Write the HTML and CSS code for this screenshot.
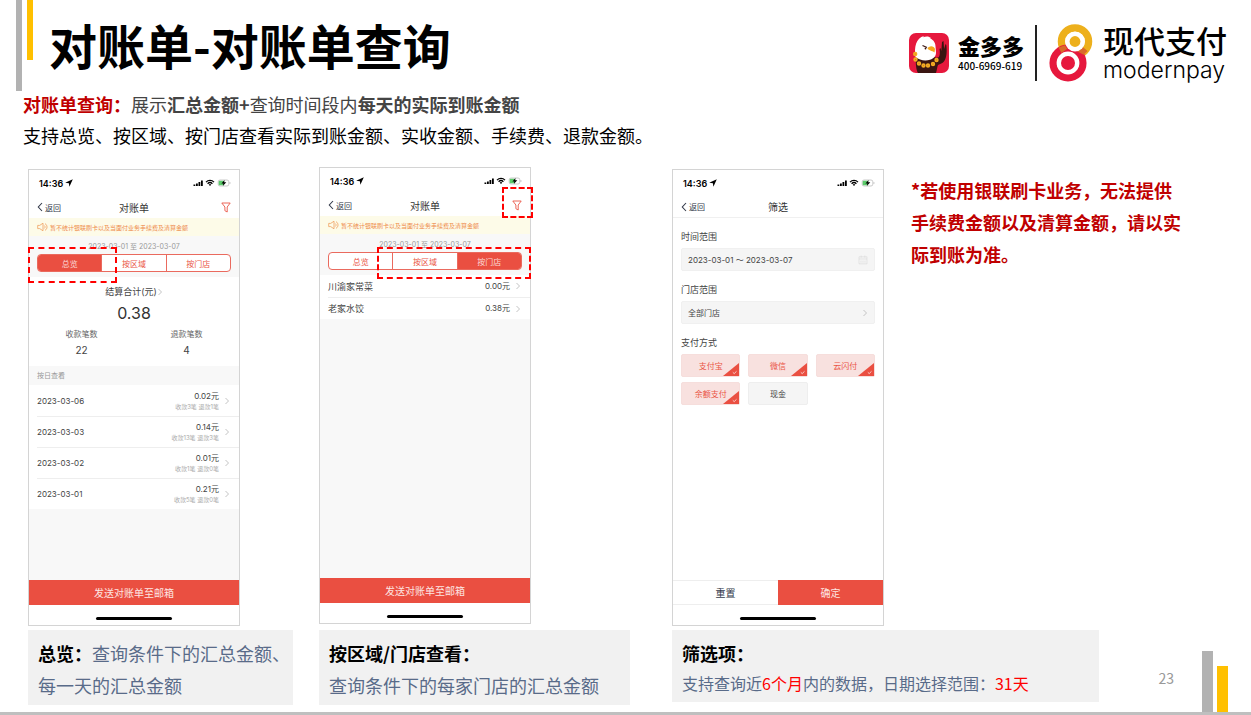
FILE: index.html
```html
<!DOCTYPE html>
<html lang="zh-CN">
<head>
  <meta charset="UTF-8" />
  <meta name="viewport" content="width=device-width, initial-scale=1.0"/>
  <title>对账单-对账单查询</title>
  <link rel="stylesheet" href="styles.css">
</head>
<body>
  <!-- shared icons -->
  <svg class="sprite" width="0" height="0" aria-hidden="true">
    <symbol id="i-arrow" viewBox="0 0 8 8"><path d="M7.8 .2 .2 3.800l3.700.5.5 3.500z"/></symbol>
    <symbol id="i-status" viewBox="0 0 38 8">
      <path d="M.5 5.4h1.8V7H.5zM3 4.400h1.800V7H3zM5.500 3h1.800v4H5.500zM8 1.400h1.800V7H8z"/>
      <path d="M13 3.1a5.6 5.6 0 0 1 8 0M14.6 4.7a3.4 3.4 0 0 1 4.8 0" fill="none" stroke="#000" stroke-width="1.3"/>
      <path d="M15.8 5.7a1.7 1.7 0 0 1 2.4 0L17 7z"/>
      <rect x="25.2" y="1" width="10.6" height="6" rx="1.8" fill="#fff" stroke="#aaa" stroke-width=".6"/>
      <path d="M26.6 1.7h4.2v4.6h-4.2a.9.9 0 0 1-.9-.9V2.600a.9.9 0 0 1 .9-.9z" fill="#5ccb6b"/>
      <path d="M31.600 1 28.400 4.500h2L29.800 7l3.500-3.700h-2.100z"/>
      <path d="M36.600 3v2c.7-.2.9-.5.9-1s-.2-.8-.9-1z" fill="#aaa"/>
    </symbol>
    <symbol id="i-back" viewBox="0 0 6 10"><path d="M5 1 1.300 5 5 9" fill="none" stroke="#333a4a" stroke-width="1.100"/></symbol>
    <symbol id="i-next" viewBox="0 0 6 8"><path d="M1.500 1 4.500 4l-3 3" fill="none" stroke="#c4c4c4" stroke-width="1"/></symbol>
    <symbol id="i-filter" viewBox="0 0 10 11"><path d="M.8 1h8.400L6.200 5v5L3.900 8.700V5z" fill="none" stroke="#ea5546" stroke-width=".9" stroke-linejoin="round"/></symbol>
    <symbol id="i-horn" viewBox="0 0 11 10"><path d="M.7 3.400h2L6 1.200v7.600L2.700 6.600h-2zM7.300 3.500c1 .8 1 2.200 0 3M8 1.600c2.700 1.600 2.700 5.200 0 6.800" fill="none" stroke="#efa060" stroke-width=".8"/></symbol>
    <symbol id="i-cal" viewBox="0 0 10 10"><path d="M1 1.800h8v7H1zM1 4h8M3.200.6v2M6.800.6v2M3 5.600v2M5 5.600v2M7 5.600v2" fill="none" stroke="#d8d8d8" stroke-width=".6"/></symbol>
    <symbol id="i-tick" viewBox="0 0 16 13"><path d="M16 0v13H0z" fill="#ea4f41"/><path d="M9.800 9.300l1.400 1.300 2.300-2.300" fill="none" stroke="#fff" stroke-width=".7"/></symbol>
  </svg>

  <div class="bar bar-top-grey"></div>
  <div class="bar bar-top-yellow"></div>

  <header class="slide-header">
    <h1>对账单-对账单查询</h1>
    <div class="brands">
      <svg class="eagle" viewBox="0 0 40 40" role="img" aria-label="金多多">
        <rect width="40" height="40" rx="7" fill="#e6183d"/>
        <path d="M9 40c-2-3-2.500-10-2-15l18-1c2 1 4 1 5 0 1-2 1-5 .5-8l1-1 .8 3 .7-9 1.500-1 .6 8 1.400-5 .8 1c.8 6 .5 12-2 16-2 3-5 3-6.300 4-1 2-1 5-2 8z" fill="#3a1511"/>
        <path d="M6.500 24C5 14 7 5 15 3l-1 1.300c3-1.300 6-1.300 8 .7l-1 .3c4 2 5.500 5 5.500 8l.5 6c0 4-2 6-6 7.500-5 1.500-10.500.5-14.500-2.800z" fill="#fff"/>
        <path d="M18.500 15.500c1-3 6.500-3.500 7.500.5l-.5 3.500c-1.500-2-4.500-1-7-4z" fill="#f6a81c"/>
        <path d="M13.500 12.500l4.500 2" stroke="#3a1511" stroke-width="1.200"/>
        <circle cx="16.500" cy="15.500" r=".9" fill="#3a1511"/>
        <g fill="#b8502a" stroke="#f4ac22" stroke-width="1.800">
          <circle cx="6.200" cy="21" r="1.300"/><circle cx="6.500" cy="26.500" r="1.300"/><circle cx="10" cy="30.500" r="1.300"/><circle cx="14.500" cy="32.500" r="1.300"/><circle cx="19" cy="32.500" r="1.300"/><circle cx="24" cy="31" r="1.300"/><circle cx="27.500" cy="27" r="1.300"/>
        </g>
      </svg>
      <div class="jdd">
        <span class="jdd-name">金多多</span>
        <span class="jdd-tel">400-6969-619</span>
      </div>
      <span class="brand-line"></span>
      <svg class="eight" viewBox="0 0 44 58" role="img" aria-label="现代支付">
        <circle cx="26" cy="17.500" r="13.500" fill="none" stroke="#edb01c" stroke-width="7.500"/>
        <circle cx="19" cy="39" r="14.800" fill="none" stroke="#e6183d" stroke-width="7.500"/>
        <path d="M9.500 23.500l6.300-2.300 2.500 3.500-5.800 4.300zM28 27.200l6.600 3.600 4-3.800-5.800-4.700z" fill="#d96a2a"/>
        <circle cx="26" cy="17.500" r="10" fill="#fff"/>
        <circle cx="19" cy="39" r="11.400" fill="#fff"/>
        <circle cx="26" cy="17.500" r="5.400" fill="#edb01c"/>
        <circle cx="19" cy="39" r="7" fill="#e6183d"/>
      </svg>
      <div class="modern">
        <span class="modern-cn">现代支付</span>
        <span class="modern-en">modernpay</span>
      </div>
    </div>
  </header>

  <section class="intro">
    <p class="intro-first"><strong class="lead">对账单查询：</strong>展示<strong>汇总金额+</strong>查询时间段内<strong>每天的实际到账金额</strong></p>
    <p>支持总览、按区域、按门店查看实际到账金额、实收金额、手续费、退款金额。</p>
  </section>

  <main class="shots">
    <section class="shot">
      <div class="phone">
        <div class="status"><span>14:36</span><svg class="loc"><use href="#i-arrow"/></svg><svg class="signals"><use href="#i-status"/></svg></div>
        <div class="nav"><button class="back"><svg><use href="#i-back"/></svg>返回</button><h2>对账单</h2><button class="filter" aria-label="筛选"><svg><use href="#i-filter"/></svg></button></div>
        <p class="notice"><svg><use href="#i-horn"/></svg>暂不统计银联刷卡以及当面付业务手续费及清算金额</p>
        <div class="range">
          <p>2023-03-01 至 2023-03-07</p>
          <div class="tabs"><button class="on">总览</button><button>按区域</button><button>按门店</button></div>
        </div>
        <div class="summary">
          <p class="sum-title">结算合计(元)<svg class="next"><use href="#i-next"/></svg></p>
          <p class="sum-value">0.38</p>
          <dl class="counts">
            <div><dt>收款笔数</dt><dd>22</dd></div>
            <div><dt>退款笔数</dt><dd>4</dd></div>
          </dl>
        </div>
        <p class="band">按日查看</p>
        <ul class="days">
          <li><span class="day">2023-03-06</span><span class="money">0.02元<small>收款3笔 退款1笔</small></span><svg class="next"><use href="#i-next"/></svg></li>
          <li><span class="day">2023-03-03</span><span class="money">0.14元<small>收款13笔 退款3笔</small></span><svg class="next"><use href="#i-next"/></svg></li>
          <li><span class="day">2023-03-02</span><span class="money">0.01元<small>收款1笔 退款0笔</small></span><svg class="next"><use href="#i-next"/></svg></li>
          <li><span class="day">2023-03-01</span><span class="money">0.21元<small>收款5笔 退款0笔</small></span><svg class="next"><use href="#i-next"/></svg></li>
        </ul>
        <div class="fill"></div>
        <div class="actions"><button class="primary">发送对账单至邮箱</button></div>
        <div class="home"></div>
        <div class="mark mark-all"></div>
      </div>
      <p class="caption"><strong>总览：</strong>查询条件下的汇总金额、<br>每一天的汇总金额</p>
    </section>

    <section class="shot shot-stores">
      <div class="phone">
        <div class="status"><span>14:36</span><svg class="loc"><use href="#i-arrow"/></svg><svg class="signals"><use href="#i-status"/></svg></div>
        <div class="nav"><button class="back"><svg><use href="#i-back"/></svg>返回</button><h2>对账单</h2><button class="filter" aria-label="筛选"><svg><use href="#i-filter"/></svg></button></div>
        <p class="notice"><svg><use href="#i-horn"/></svg>暂不统计银联刷卡以及当面付业务手续费及清算金额</p>
        <div class="range">
          <p>2023-03-01 至 2023-03-07</p>
          <div class="tabs"><button>总览</button><button>按区域</button><button class="on">按门店</button></div>
        </div>
        <ul class="stores">
          <li><span>川渝家常菜</span><span class="money">0.00元</span><svg class="next"><use href="#i-next"/></svg></li>
          <li><span>老家水饺</span><span class="money">0.38元</span><svg class="next"><use href="#i-next"/></svg></li>
        </ul>
        <div class="fill"></div>
        <div class="actions"><button class="primary">发送对账单至邮箱</button></div>
        <div class="home"></div>
        <div class="mark mark-filter"></div>
        <div class="mark mark-tabs"></div>
      </div>
      <p class="caption"><strong>按区域/门店查看：</strong><br>查询条件下的每家门店的汇总金额</p>
    </section>

    <section class="shot shot-filter">
      <div class="with-note">
        <div class="phone">
          <div class="status"><span>14:36</span><svg class="loc"><use href="#i-arrow"/></svg><svg class="signals"><use href="#i-status"/></svg></div>
          <div class="nav nav-line"><button class="back"><svg><use href="#i-back"/></svg>返回</button><h2>筛选</h2></div>
          <form class="form">
            <label class="field-name" for="range">时间范围</label>
            <div class="field"><input id="range" type="text" value="2023-03-01 ～ 2023-03-07"><svg class="cal"><use href="#i-cal"/></svg></div>
            <label class="field-name" for="store">门店范围</label>
            <div class="field"><select id="store"><option>全部门店</option></select><svg class="next"><use href="#i-next"/></svg></div>
            <fieldset>
              <legend class="field-name">支付方式</legend>
              <div class="chips">
                <label class="chip"><input type="checkbox" checked>支付宝<svg><use href="#i-tick"/></svg></label>
                <label class="chip"><input type="checkbox" checked>微信<svg><use href="#i-tick"/></svg></label>
                <label class="chip"><input type="checkbox" checked>云闪付<svg><use href="#i-tick"/></svg></label>
                <label class="chip"><input type="checkbox" checked>余额支付<svg><use href="#i-tick"/></svg></label>
                <label class="chip"><input type="checkbox">现金<svg><use href="#i-tick"/></svg></label>
              </div>
            </fieldset>
          </form>
          <div class="actions"><button class="plain">重置</button><button class="primary">确定</button></div>
          <div class="home"></div>
        </div>
        <p class="note">*若使用银联刷卡业务，无法提供手续费金额以及清算金额，请以实际到账为准。</p>
      </div>
      <p class="caption"><strong>筛选项：</strong><span class="caption-small">支持查询近<em>6个月</em>内的数据，日期选择范围：<em>31天</em></span></p>
    </section>
  </main>

  <footer class="corner">
    <span class="page-no">23</span>
    <div class="bar-grey"></div>
    <div class="bar-yellow"></div>
  </footer>
</body>
</html>
```
FILE: styles.css
```css
* {
  box-sizing: border-box;
}

body {
  position: relative;
  min-height: 100vh;
  margin: 0;
  background: #fff;
  border-bottom: 3px solid #bfbfbf;
  font-family: "Noto Sans CJK SC", sans-serif;
  color: #000;
}

h1, h2, p, ul, dl, dd, fieldset {
  margin: 0;
  padding: 0;
}

ul { list-style: none; }

button, input, select {
  margin: 0;
  padding: 0;
  border: 0;
  background: none;
  font: inherit;
  color: inherit;
}

.sprite { position: absolute; }

/* slide decoration */
.bar {
  position: absolute;
  top: 0;
  width: 6px;
}

.bar-top-grey {
  left: 16px;
  height: 91px;
  background: #b2b2b2;
}

.bar-top-yellow {
  left: 27px;
  height: 60px;
  background: #ffc000;
}

.corner {
  position: absolute;
  right: 23px;
  bottom: 0;
  display: flex;
  align-items: flex-end;
  gap: 4px;
}

.bar-grey {
  width: 11px;
  height: 61px;
  background: #b2b2b2;
}

.bar-yellow {
  width: 11px;
  height: 46px;
  background: #ffc000;
}

.page-no {
  padding: 0 24px 24px 0;
  font-size: 14px;
  line-height: 20px;
  color: #999;
}

/* header */
.slide-header {
  display: flex;
  justify-content: space-between;
  align-items: center;
  height: 89px;
  padding: 0 24px 2px 49px;
}

h1 {
  font-size: 48px;
  line-height: 64px;
  font-weight: 700;
}

.brands {
  display: flex;
  align-items: center;
  padding-top: 18px;
}

.eagle {
  width: 40px;
  height: 40px;
}

.jdd {
  display: flex;
  flex-direction: column;
  margin: 0 11px 0 9px;
}

.jdd-name {
  font-size: 22px;
  line-height: 26px;
  font-weight: 900;
}

.jdd-tel {
  font-size: 10px;
  line-height: 15px;
  font-weight: 500;
}

.brand-line {
  width: 2px;
  height: 56px;
  background: #222;
}

.eight {
  width: 44px;
  height: 58px;
  margin: 0 10px 0 12px;
}

.modern {
  display: flex;
  flex-direction: column;
}

.modern-cn {
  font-size: 31px;
  line-height: 34px;
  font-weight: 500;
}

.modern-en {
  font-family: Inter, sans-serif;
  font-size: 23px;
  line-height: 26px;
  font-weight: 300;
}

/* intro text */
.intro {
  padding-left: 23px;
  font-size: 18px;
  line-height: 31px;
}

.intro-first { color: #444; }
.lead { color: #c00000; }

/* columns */
.shots {
  display: grid;
  grid-template-columns: 291fr 353fr 515fr;
  padding: 16px 64px 7px 28px;
}

.shot {
  display: flex;
  flex-direction: column;
  gap: 4px;
  padding-top: 2px;
}

.shot-stores {
  gap: 6px;
  padding-top: 0;
}

.with-note {
  display: flex;
  gap: 27px;
}

.note {
  flex: 1;
  padding-top: 5px;
  font-size: 18px;
  line-height: 32px;
  font-weight: 700;
  color: #c00000;
}

.caption {
  width: 91%;
  padding: 7px 0 4px 10px;
  background: #f1f1f1;
  font-size: 18px;
  line-height: 32px;
  color: #596b89;
  white-space: nowrap;
}

.caption strong { color: #000; }

.caption em {
  font-style: normal;
  color: #f00;
}

.shot-stores .caption { width: 88%; }
.shot-filter .caption { width: 83%; }

.caption-small {
  display: block;
  font-size: 16px;
  line-height: 29px;
}

/* phone */
.phone {
  position: relative;
  display: flex;
  flex-direction: column;
  flex-shrink: 0;
  width: 212px;
  min-height: 457px;
  border: 1px solid #d4d4d4;
  font-family: Inter, "Noto Sans CJK SC", sans-serif;
  font-size: 8px;
  color: #444;
}

.status {
  display: flex;
  align-items: center;
  gap: 2px;
  height: 26px;
  padding: 0 8px 0 10px;
  font-size: 9px;
  font-weight: 600;
  color: #000;
}

.loc {
  width: 8px;
  height: 8px;
}

.signals {
  width: 38px;
  height: 8px;
  margin-left: auto;
}

.nav {
  display: grid;
  grid-template-columns: 1fr auto 1fr;
  align-items: center;
  height: 22px;
  padding: 0 8px;
}

.nav-line { border-bottom: 1px solid #f0f0f0; }

.nav h2 {
  font-size: 10px;
  font-weight: 400;
  color: #333;
}

.back {
  display: flex;
  align-items: center;
  gap: 2px;
  color: #333a4a;
}

.back svg {
  width: 6px;
  height: 10px;
}

.filter {
  justify-self: end;
  display: flex;
}

.filter svg {
  width: 10px;
  height: 11px;
}

.notice {
  display: flex;
  align-items: center;
  gap: 2px;
  height: 18px;
  padding-left: 8px;
  background: #fdfbe8;
  font-size: 6px;
  color: #ee8a4a;
  white-space: nowrap;
}

.notice svg {
  width: 11px;
  height: 10px;
}

.range {
  padding: 4px 8px 5px;
  background: #f8f8f8;
}

.range p {
  font-size: 7px;
  line-height: 14px;
  text-align: center;
  color: #999;
}

.tabs {
  display: flex;
  height: 18px;
  overflow: hidden;
  border: 1px solid #ea6a5e;
  border-radius: 4px;
  background: #fff;
  color: #ea5546;
}

.tabs button { flex: 1; }
.tabs button + button { border-left: 1px solid #ea6a5e; }

.tabs .on {
  background: #ea4f41;
  color: #fbd9d5;
}

.summary {
  padding-top: 7px;
  text-align: center;
}

.next {
  width: 6px;
  height: 8px;
}

.sum-title {
  display: flex;
  justify-content: center;
  align-items: center;
  font-size: 9px;
  line-height: 16px;
}

.sum-value {
  font-size: 16px;
  line-height: 26px;
  color: #333;
}

.counts {
  display: flex;
  padding-bottom: 8px;
  line-height: 16px;
}

.counts div { flex: 1; }
.counts dt { color: #666; }
.counts dd { font-size: 10px; }

.band {
  padding-left: 8px;
  background: #f8f8f8;
  font-size: 7px;
  line-height: 19px;
  color: #999;
}

.days li, .stores li {
  display: flex;
  align-items: center;
  gap: 5px;
  margin-left: 8px;
  padding-right: 9px;
}

.days li + li, .stores li + li { border-top: 1px solid #eee; }

.days li { height: 31px; }
.stores li { height: 22px; }

.stores { font-size: 9px; }

.money {
  margin-left: auto;
  font-size: 8px;
  line-height: 11px;
  text-align: right;
}

.money small {
  display: block;
  font-size: 6px;
  line-height: 9px;
  color: #aaa;
}

.fill {
  flex: 1;
  background: #f8f8f8;
}

.actions {
  display: flex;
  height: 25px;
  border-top: 1px solid #eee;
  border-bottom: 1px solid #eee;
  font-size: 10px;
}

.actions button { flex: 1; }

.primary {
  margin: -1px 0;
  background: #ea4f41;
  color: #fde6e3;
}

.plain { color: #333a4a; }

.home {
  width: 76px;
  height: 3px;
  margin: 12px auto 5px;
  border-radius: 2px;
  background: #000;
}

/* filter form */
.form {
  flex: 1;
  padding: 7px 8px 0;
}

fieldset {
  min-width: 0;
  border: 0;
}

.field-name {
  display: block;
  padding: 0;
  font-size: 9px;
  line-height: 23px;
}

.field {
  display: flex;
  align-items: center;
  justify-content: space-between;
  height: 23px;
  margin-bottom: 7px;
  padding: 0 6px;
  border: 1px solid #f0f0f0;
  border-radius: 2px;
  background: #f5f5f5;
}

.field input, .field select {
  flex: 1;
  min-width: 0;
  appearance: none;
}

.cal {
  width: 10px;
  height: 10px;
}

.chips {
  display: grid;
  grid-template-columns: repeat(3, 1fr);
  gap: 5px 8px;
}

.chip {
  position: relative;
  height: 23px;
  border: 1px solid #eee;
  border-radius: 2px;
  background: #f5f5f5;
  line-height: 22px;
  text-align: center;
}

.chip input {
  position: absolute;
  opacity: 0;
}

.chip svg {
  display: none;
  position: absolute;
  right: 0;
  bottom: 0;
  width: 16px;
  height: 13px;
}

.chip:has(:checked) {
  border-color: #f6dedc;
  background: #f8e1df;
  color: #ea5546;
}

.chip:has(:checked) svg { display: block; }

/* dashed call-outs over the phones */
.mark {
  position: absolute;
  border: 2px dashed #f00;
}

.mark-all {
  top: 77px;
  left: -1px;
  width: 89px;
  height: 36px;
}

.mark-filter {
  top: 19px;
  right: -3px;
  width: 31px;
  height: 31px;
}

.mark-tabs {
  top: 79px;
  right: -1px;
  width: 154px;
  height: 32px;
}
```
